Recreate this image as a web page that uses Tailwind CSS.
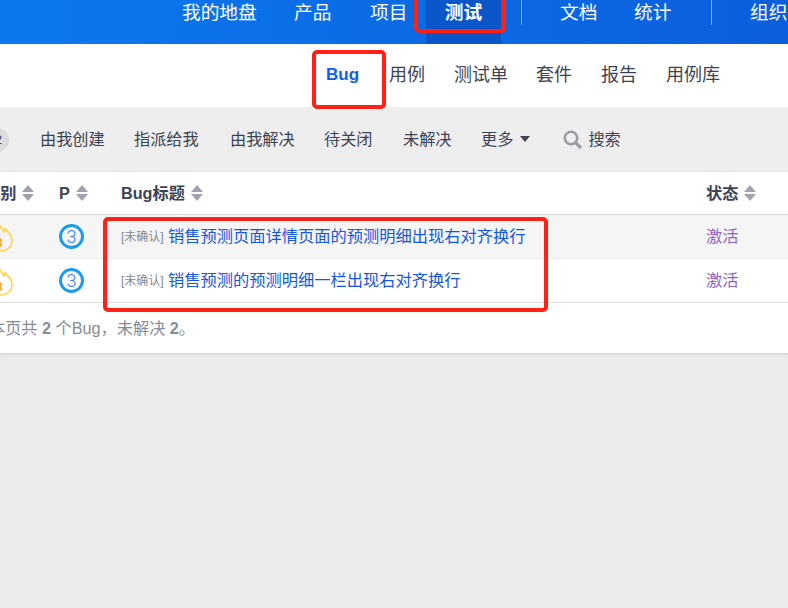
<!DOCTYPE html>
<html lang="zh-CN">
<head>
  <meta charset="UTF-8" />
  <title>Bug</title>
  <script src="https://cdn.jsdelivr.net/npm/@tailwindcss/browser@4"></script>
</head>
<body class="relative w-[788px] h-[608px] overflow-hidden bg-[#ececec] font-['Liberation_Sans','Noto_Sans_CJK_SC',sans-serif]">

  <!-- main nav -->
  <header class="h-11 flex items-start pl-[163px] text-white text-[18.7px] bg-gradient-to-r from-[#0d78ee] to-[#0b5fdc]">
    <a class="h-full w-[112px] pl-[19px] leading-[25px] whitespace-nowrap">我的地盘</a>
    <a class="h-full w-[76px] pl-[19px] leading-[25px]">产品</a>
    <a class="h-full w-[75px] pl-[19px] leading-[25px] whitespace-nowrap">项目</a>
    <a class="h-full w-[75px] bg-[#0b57c9] text-center font-bold leading-[25px]">测试</a>
    <span class="ml-5 w-px h-[25px] bg-white/50"></span>
    <a class="ml-[38px] h-full w-[74px] leading-[25px]">文档</a>
    <a class="h-full w-[77px] leading-[25px]">统计</a>
    <span class="w-px h-[25px] bg-white/50"></span>
    <a class="ml-[38px] leading-[25px] whitespace-nowrap">组织</a>
  </header>

  <!-- sub nav -->
  <nav class="h-[63px] bg-white flex items-center pl-[326px] pb-[1px] text-[18px] text-[#3c4353]">
    <a class="w-[63px] font-bold text-[17px] text-[#0f5fe3]">Bug</a>
    <a class="w-[65px]">用例</a>
    <a class="w-[82px]">测试单</a>
    <a class="w-[65px]">套件</a>
    <a class="w-[65px]">报告</a>
    <a>用例库</a>
  </nav>

  <!-- toolbar -->
  <div class="h-[65px] bg-[#eeeeee] flex items-center text-[16.2px] text-[#3c4353] whitespace-nowrap">
    <span class="ml-[-15px] mr-[31px] w-6 h-6 rounded-full bg-[#dcdcdf] text-[13px] text-[#3c4353] text-right pr-[7px] leading-6">2</span>
    <a class="w-[94px]">由我创建</a>
    <a class="w-[96px]">指派给我</a>
    <a class="w-[94px]">由我解决</a>
    <a class="w-[79px]">待关闭</a>
    <a class="w-[78px]">未解决</a>
    <a class="flex items-center gap-[7px]">更多
      <svg class="w-[10px] h-[6px]" viewBox="0 0 10 6"><path d="M0 0h10L5 6z" fill="#3c4353"/></svg>
    </a>
    <svg class="ml-[33px] w-5 h-5" viewBox="0 0 20 20" fill="none" stroke="#9a9da6"><circle cx="8" cy="8" r="6.2" stroke-width="2.6"/><path d="M12.6 12.6 18 18" stroke-width="3.2"/></svg>
    <a class="ml-[5px]">搜索</a>
  </div>

  <!-- bug table -->
  <section class="h-[181px] bg-white shadow-[0_1px_3px_rgba(0,0,0,0.15)] text-[16.2px]">
    <div class="h-[43px] pt-[1px] grid grid-cols-[59px_62px_585px_1fr] items-center border-b border-[#dddddd] font-bold text-[#3c4353]">
      <div class="flex items-center ml-[-16px] whitespace-nowrap">级别<svg class="ml-1.5 w-3 h-4" viewBox="0 0 12 16" fill="#a0a3ad"><path d="M6 0l6 7H0zM6 16l6-7H0z"/></svg></div>
      <div class="flex items-center">P<svg class="ml-1.5 w-3 h-4" viewBox="0 0 12 16" fill="#a0a3ad"><path d="M6 0l6 7H0zM6 16l6-7H0z"/></svg></div>
      <div class="flex items-center">Bug标题<svg class="ml-1.5 w-3 h-4" viewBox="0 0 12 16" fill="#a0a3ad"><path d="M6 0l6 7H0zM6 16l6-7H0z"/></svg></div>
      <div class="flex items-center">状态<svg class="ml-1.5 w-3 h-4" viewBox="0 0 12 16" fill="#a0a3ad"><path d="M6 0l6 7H0zM6 16l6-7H0z"/></svg></div>
    </div>

    <div class="h-11 grid grid-cols-[59px_62px_585px_1fr] items-center border-b border-[#eeeeee] bg-[#f5f5f5]">
      <div class="relative h-full">
        <svg class="absolute left-[-14px] top-[8px] w-[27px] h-[29px]" viewBox="0 0 27 29" fill="none"><path d="M13 1c1 4 4 5 5 8 1-1 1-2 1-3 4 3 7 7 7 12 0 6-5 10-12 10S1 24 1 18c0-4 2-7 5-10 0 2 1 3 2 4 0-5 2-8 5-11z" stroke="#ffd24d" stroke-width="1.6"/><text x="13" y="24" font-size="13" font-weight="700" text-anchor="middle" fill="#f5a623">3</text></svg>
      </div>
      <div><span class="flex items-center justify-center w-[25px] h-[25px] rounded-full border-[3px] border-[#1e9be8] font-['Roboto'] font-light text-[#2f7fe8] text-[18px]">3</span></div>
      <div class="flex items-center whitespace-nowrap">
        <span class="mt-[1px] text-[12px] text-[#85888f] w-[47px]">[未确认]</span>
        <a class="text-[16.25px] text-[#1656e0]">销售预测页面详情页面的预测明细出现右对齐换行</a>
      </div>
      <div class="text-[#8e5fc4]">激活</div>
    </div>

    <div class="h-11 grid grid-cols-[59px_62px_585px_1fr] items-center border-b border-[#dddddd]">
      <div class="relative h-full">
        <svg class="absolute left-[-14px] top-[8px] w-[27px] h-[29px]" viewBox="0 0 27 29" fill="none"><path d="M13 1c1 4 4 5 5 8 1-1 1-2 1-3 4 3 7 7 7 12 0 6-5 10-12 10S1 24 1 18c0-4 2-7 5-10 0 2 1 3 2 4 0-5 2-8 5-11z" stroke="#ffd24d" stroke-width="1.6"/><text x="13" y="24" font-size="13" font-weight="700" text-anchor="middle" fill="#f5a623">3</text></svg>
      </div>
      <div><span class="flex items-center justify-center w-[25px] h-[25px] rounded-full border-[3px] border-[#1e9be8] font-['Roboto'] font-light text-[#2f7fe8] text-[18px]">3</span></div>
      <div class="flex items-center whitespace-nowrap">
        <span class="mt-[1px] text-[12px] text-[#85888f] w-[47px]">[未确认]</span>
        <a class="text-[16.25px] text-[#1656e0]">销售预测的预测明细一栏出现右对齐换行</a>
      </div>
      <div class="text-[#8e5fc4]">激活</div>
    </div>

    <div class="ml-[-11px] pt-[13px] text-[#868b96] whitespace-nowrap">本页共 <b>2</b> 个Bug，未解决 <b>2</b>。</div>
  </section>

  <!-- red annotation boxes -->
  <div class="absolute left-[414px] top-[-6px] w-[92px] h-[39px] border-[4px] border-[#ff2016] rounded-[5px]"></div>
  <div class="absolute left-[312px] top-[50px] w-[74px] h-[59px] border-[4px] border-[#ff2016] rounded-[5px]"></div>
  <div class="absolute left-[103px] top-[217px] w-[445px] h-[95px] border-[4px] border-[#ff2016] rounded-[5px]"></div>
</body>
</html>
